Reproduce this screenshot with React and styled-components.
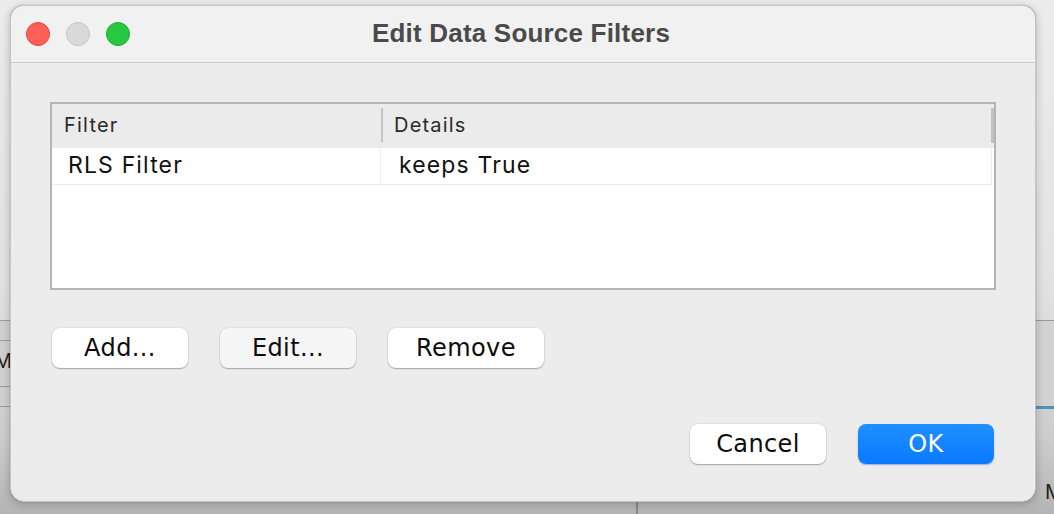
import React from "react";
import styled, { createGlobalStyle } from "styled-components";

const Global = createGlobalStyle`
  html, body { margin: 0; padding: 0; }
  body {
    width: 1054px;
    height: 514px;
    overflow: hidden;
    font-family: "Inter", "Liberation Sans", sans-serif;
  }
`;

const Stage = styled.div`
  position: relative;
  width: 1054px;
  height: 514px;
  overflow: hidden;
  background:
    linear-gradient(#9c9c9c, #9c9c9c) 0 320px / 12px 1px no-repeat,
    linear-gradient(#9c9c9c, #9c9c9c) 0 340px / 12px 1px no-repeat,
    linear-gradient(#9c9c9c, #9c9c9c) 0 386px / 12px 1px no-repeat,
    linear-gradient(#9c9c9c, #9c9c9c) 0 406px / 12px 1px no-repeat,
    linear-gradient(#9a9a9a, #9a9a9a) 1030px 320px / 24px 1px no-repeat,
    linear-gradient(#4f93b3, #4f93b3) 1030px 406px / 24px 3px no-repeat,
    linear-gradient(#d2d2d2, #d2d2d2) 1030px 321px / 24px 85px no-repeat,
    linear-gradient(#d0d0d0, #d0d0d0) 0 321px / 12px 85px no-repeat,
    linear-gradient(#8a8a8a, #8a8a8a) 636px 496px / 2px 18px no-repeat,
    linear-gradient(to bottom, #ececec 0%, #e2e2e2 55%, #cdcdcd 85%, #b4b4b4 100%);
`;

const GhostText = styled.span`
  position: absolute;
  left: ${(p) => p.$x}px;
  top: ${(p) => p.$y}px;
  font-family: "Inter", "Liberation Sans", sans-serif;
  font-size: 20px;
  color: #222;
`;

const Dialog = styled.div`
  position: absolute;
  left: 10px;
  top: 5px;
  width: 1026px;
  height: 497px;
  box-sizing: border-box;
  border-radius: 14px;
  background: #ececec;
  border: 1px solid #c4c4c4;
  box-shadow: 0 2px 10px rgba(0, 0, 0, 0.22), 0 0 1px rgba(0, 0, 0, 0.3);
  overflow: hidden;
  display: flex;
  flex-direction: column;
`;

const TitleBar = styled.div`
  position: relative;
  height: 56px;
  flex: none;
  background: #f1f1f1;
  border-bottom: 1px solid #cbcbcb;
  display: flex;
  align-items: center;
  justify-content: center;
`;

const Lights = styled.div`
  position: absolute;
  left: 15px;
  top: 16px;
  display: flex;
  gap: 16px;
`;

const Light = styled.span`
  width: 24px;
  height: 24px;
  box-sizing: border-box;
  border-radius: 50%;
  background: ${(p) => p.$bg};
  border: 1px solid ${(p) => p.$bd};
`;

const Title = styled.h1`
  margin: 0;
  font-family: "Liberation Sans", "Inter", sans-serif;
  font-weight: 700;
  font-size: 26px;
  color: #4a4a4a;
  letter-spacing: 0.2px;
  transform: translate(-2px, -1px);
`;

const Body = styled.div`
  flex: 1;
  display: flex;
  flex-direction: column;
  padding: 39px 39px 0 39px;
`;

const Table = styled.div`
  height: 188px;
  box-sizing: border-box;
  border: 2px solid #b4b4b4;
  background: #ffffff;
  display: flex;
  flex-direction: column;
`;

const HeaderRow = styled.div`
  position: relative;
  height: 44px;
  flex: none;
  display: grid;
  grid-template-columns: 329px 1fr;
  background: #ebebeb;
  &::after {
    content: "";
    position: absolute;
    right: 0;
    top: 4px;
    width: 3px;
    height: 35px;
    background: #c2c2c2;
  }
`;

const HeaderCell = styled.div`
  display: flex;
  align-items: center;
  padding-left: 12px;
  padding-bottom: 2px;
  font-family: "Inter", "Liberation Sans", sans-serif;
  font-size: 20px;
  letter-spacing: 1.2px;
  color: #2a2a2a;
  ${(p) =>
    !p.$first &&
    `
    position: relative;
    padding-left: 13px;
    &::before {
      content: "";
      position: absolute;
      left: 0;
      top: 4px;
      width: 2px;
      height: 34px;
      background: #c4c4c4;
    }
  `}
`;

const DataRow = styled.div`
  height: 36px;
  flex: none;
  display: grid;
  grid-template-columns: 328px 1fr;
  border-bottom: 1px solid #ececec;
  margin-right: 2px;
  border-right: 1px solid #ececec;
`;

const DataCell = styled.div`
  display: flex;
  align-items: center;
  padding-left: ${(p) => (p.$first ? 16 : 18)}px;
  padding-bottom: 2px;
  font-family: "Inter", "Liberation Sans", sans-serif;
  font-size: 23px;
  letter-spacing: 1.15px;
  color: #111;
  border-left: ${(p) => (p.$first ? "none" : "1px solid #ededed")};
`;

const ButtonRow = styled.div`
  display: flex;
  gap: 32px;
  margin-top: ${(p) => (p.$end ? 56 : 38)}px;
  padding: 0 2px;
  justify-content: ${(p) => (p.$end ? "flex-end" : "flex-start")};
`;

const Button = styled.button`
  width: ${(p) => p.$w || 136}px;
  height: 40px;
  box-sizing: border-box;
  border: none;
  border-radius: 8px;
  padding: 0 0 1px 0;
  font-family: "DejaVu Sans", "Liberation Sans", sans-serif;
  font-size: 24px;
  letter-spacing: 0.4px;
  color: #0c0c0c;
  background: ${(p) => (p.$muted ? "#f5f5f5" : "#ffffff")};
  box-shadow: 0 1px 1.5px rgba(0, 0, 0, 0.28), 0 0 0 0.5px rgba(0, 0, 0, 0.08);
  ${(p) =>
    p.$primary &&
    `
    background: linear-gradient(to bottom, #1f90ff, #0a79ff);
    color: #ffffff;
    box-shadow: 0 1px 1.5px rgba(0, 60, 160, 0.35);
  `}
`;

export default function App() {
  return (
    <>
      <Global />
      <Stage>
        <GhostText $x={-6} $y={349}>MI</GhostText>
        <GhostText $x={1045} $y={480}>M</GhostText>
        <Dialog>
          <TitleBar>
            <Lights>
              <Light $bg="#fe5f57" $bd="#e2463f" />
              <Light $bg="#dadada" $bd="#c4c4c4" />
              <Light $bg="#28c840" $bd="#1fad2f" />
            </Lights>
            <Title>Edit Data Source Filters</Title>
          </TitleBar>
          <Body>
            <Table>
              <HeaderRow>
                <HeaderCell $first>Filter</HeaderCell>
                <HeaderCell>Details</HeaderCell>
              </HeaderRow>
              <DataRow>
                <DataCell $first>RLS Filter</DataCell>
                <DataCell>keeps True</DataCell>
              </DataRow>
            </Table>
            <ButtonRow>
              <Button>Add...</Button>
              <Button $muted>Edit...</Button>
              <Button $w={156}>Remove</Button>
            </ButtonRow>
            <ButtonRow $end>
              <Button>Cancel</Button>
              <Button $primary>OK</Button>
            </ButtonRow>
          </Body>
        </Dialog>
      </Stage>
    </>
  );
}
